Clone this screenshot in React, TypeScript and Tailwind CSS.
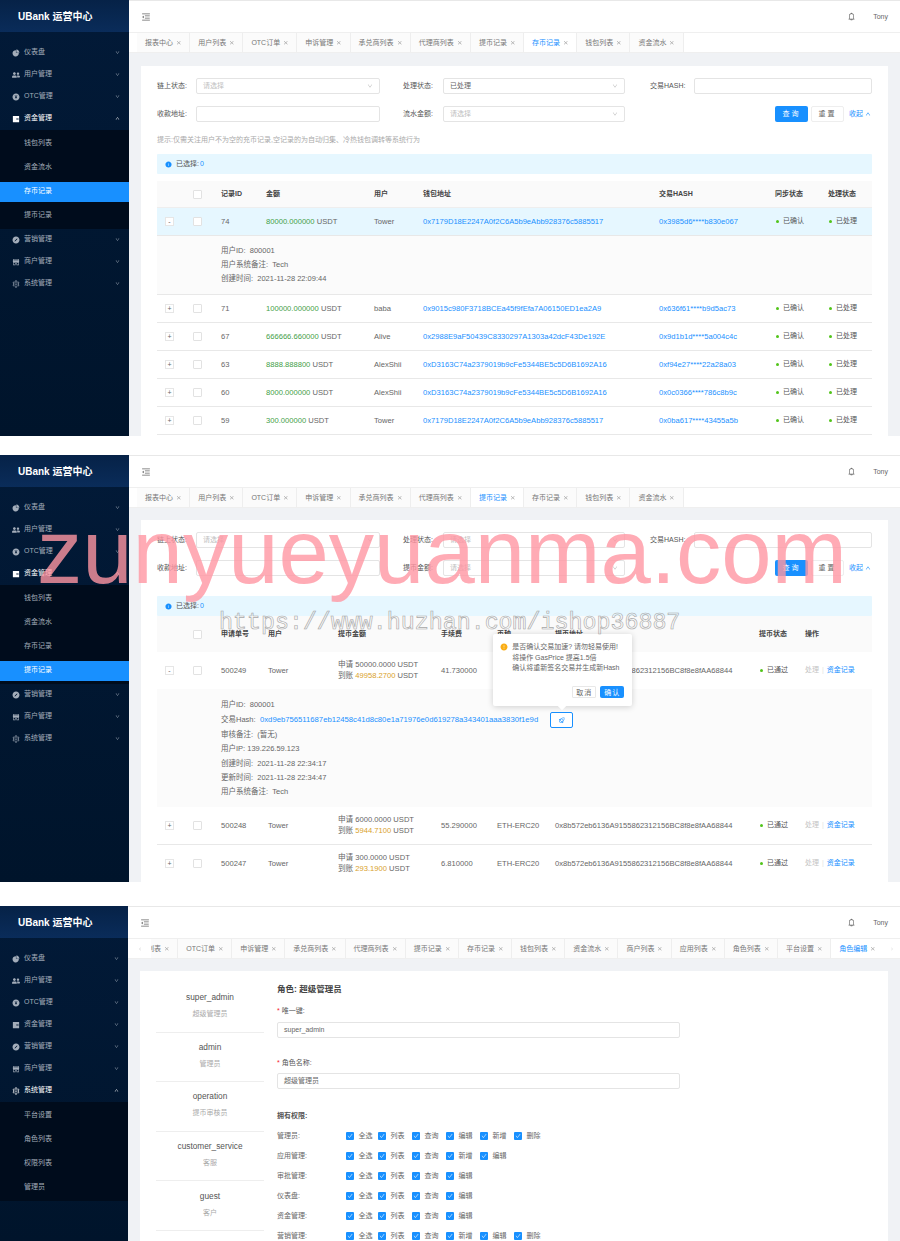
// @ts-nocheck
import React from "react";
import { AiFillPieChart, AiFillWallet, AiFillShop, AiFillPayCircle, AiFillCompass, AiOutlineSetting, AiOutlineDown, AiOutlineUp, AiOutlineClose, AiOutlineMenuFold, AiOutlineBell, AiOutlineRocket, AiFillExclamationCircle, AiFillInfoCircle, AiOutlineLeft, AiOutlineRight, AiOutlineCheck } from "react-icons/ai";
import { FaUserFriends } from "react-icons/fa";

const menus = [
  { name: "仪表盘", icon: AiFillPieChart },
  { name: "用户管理", icon: FaUserFriends },
  { name: "OTC管理", icon: AiFillPayCircle },
  { name: "资金管理", icon: AiFillWallet, subs: ["钱包列表", "资金流水", "存币记录", "提币记录"] },
  { name: "营销管理", icon: AiFillCompass },
  { name: "商户管理", icon: AiFillShop },
  { name: "系统管理", icon: AiOutlineSetting, subs: ["平台设置", "角色列表", "权限列表", "管理员"] },
];

const Sidebar = ({ open, active, w = "w-[129px]" }) => (
  <div className={`${w} shrink-0 h-full bg-gradient-to-b from-[#021a38] to-[#00142b] overflow-hidden`}>
    <div className="h-[32px] bg-gradient-to-b from-[#062247] to-[#0a2c5a] pl-[18px] flex items-center text-white text-[10px] font-semibold">UBank 运营中心</div>
    <div className="pt-[9.5px]">
      {menus.map(m => {
        const Icon = m.icon;
        const isOpen = open === m.name;
        return (
          <div key={m.name}>
            <div className={`h-[22px] pl-[12px] pr-[9px] flex items-center text-[7px] ${isOpen ? "text-white" : "text-[#a3adba]"}`}>
              <Icon className="w-[8px] h-[8px] mr-[4px] shrink-0" />
              <span>{m.name}</span>
              {isOpen ? <AiOutlineUp className="ml-auto w-[5px] h-[5px] text-white" /> : <AiOutlineDown className="ml-auto w-[5px] h-[5px]" />}
            </div>
            {isOpen && (
              <div className="bg-[#000c1c] pt-[2px] pb-[1px]">
                {m.subs.map(s => (
                  <div key={s} className="h-[24px] py-[2px]">
                    <div className={`h-[20px] pl-[24px] flex items-center text-[7px] ${s === active ? "bg-[#1890ff] text-white" : "text-[#a3adba]"}`}>{s}</div>
                  </div>
                ))}
              </div>
            )}
          </div>
        );
      })}
    </div>
  </div>
);

const Topbar = () => (
  <div className="h-[32px] bg-white border-t border-[#e8e8e8] flex items-center pl-[12px] pr-[12px] text-[#666]">
    <AiOutlineMenuFold className="w-[10px] h-[10px]" />
    <AiOutlineBell className="ml-auto w-[9px] h-[9px]" />
    <span className="ml-[17px] text-[7px] pt-[1px]">Tony</span>
  </div>
);

const Tab = ({ name, active }) => (
  <div className={`h-[20px] shrink-0 flex items-center pl-2 pr-[7.7px] gap-[3px] text-[7px] border-r border-[#eee] ${active ? "bg-white text-[#1890ff]" : "bg-[#fbfbfb] text-[#777]"}`}>
    <span>{name}</span>
    <AiOutlineClose className="w-[5.5px] h-[5.5px] text-[#888]" />
  </div>
);

const Tabs = ({ items, active }) => (
  <div className="h-[21px] bg-white border-t border-b border-[#efefef] pl-[8px] flex overflow-hidden">
    {items.map(t => <Tab key={t} name={t} active={t === active} />)}
  </div>
);

const Select = ({ w, value }) => (
  <div className={`${w} h-[16px] border border-[#e4e4e4] rounded-[2px] flex items-center justify-between pl-[6px] pr-[6px] text-[7px] ${value ? "text-[#666]" : "text-[#c0c0c0]"}`}>
    <span>{value || "请选择"}</span>
    <AiOutlineDown className="w-[6px] h-[6px] text-[#bbb]" />
  </div>
);

const Input = ({ w }) => <div className={`${w} h-[16px] border border-[#e4e4e4] rounded-[2px]`} />;

const Label = ({ w, text }) => <div className={`${w} text-[7px] text-[#555] shrink-0`}>{text}</div>;

const SearchForm = ({ status, amountLabel }) => (
  <div>
    <div className="flex items-center h-[16px]">
      <Label w="w-[39px]" text="链上状态:" />
      <Select w="w-[184px]" />
      <div className="w-[23px]" />
      <Label w="w-[40px]" text="处理状态:" />
      <Select w="w-[182px]" value={status} />
      <div className="w-[25px]" />
      <Label w="w-[44px]" text="交易HASH:" />
      <Input w="w-[178px]" />
    </div>
    <div className="flex items-center h-[16px] mt-[12px]">
      <Label w="w-[39px]" text="收款地址:" />
      <Input w="w-[184px]" />
      <div className="w-[23px]" />
      <Label w="w-[40px]" text={amountLabel} />
      <Select w="w-[182px]" />
      <button className="ml-[150px] w-[33px] h-[16px] bg-[#1890ff] text-white rounded-[2px] text-[7px] tracking-[2px]">查询</button>
      <button className="ml-[3px] w-[33px] h-[16px] border border-[#eee] text-[#666] rounded-[2px] text-[7px] tracking-[2px]">重置</button>
      <span className="ml-[5px] text-[7px] text-[#1890ff] flex items-center gap-[2px]">收起<AiOutlineUp className="w-[6px] h-[6px]" /></span>
    </div>
  </div>
);

const Alert = () => (
  <div className="h-[20px] bg-[#e6f7ff] flex items-center pl-[8px] text-[7px] text-[#555] rounded-[1px]">
    <AiFillInfoCircle className="w-[7px] h-[7px] text-[#1890ff] mr-[4px]" />
    已选择: <span className="text-[#1890ff] ml-[1px]">0</span>
  </div>
);

const Expand = ({ open }) => (
  <div className="ml-[8px] w-[9px] h-[9px] border border-[#e6e6e6] bg-white flex items-center justify-center text-[7px] leading-none text-[#666]">{open ? "-" : "+"}</div>
);

const Check = () => <div className="w-[9px] h-[9px] border border-[#e2e2e2] bg-white rounded-[1px]" />;

const Dot = ({ text }) => (
  <span className="flex items-center text-[7px] text-[#555]"><i className="w-[2.5px] h-[2.5px] rounded-full bg-[#52c41a] ml-[1px] mr-[4.5px]" />{text}</span>
);

const addr1 = "0x7179D18E2247A0f2C6A5b9eAbb928376c5885517";
const addr2 = "0xD3163C74a2379019b9cFe5344BE5c5D6B1692A16";
const depositRows = [
  ["71", "100000.000000", "baba", "0x9015c980F3718BCEa45f9fEfa7A06150ED1ea2A9", "0x636f61****b9d5ac73"],
  ["67", "666666.660000", "Alive", "0x2988E9aF50439C8330297A1303a42dcF43De192E", "0x9d1b1d****5a004c4c"],
  ["63", "8888.888800", "AlexShii", addr2, "0xf94e27****22a28a03"],
  ["60", "8000.000000", "AlexShii", addr2, "0x0c0366****786c8b9c"],
  ["59", "300.000000", "Tower", addr1, "0x0ba617****43455a5b"],
];

const depCols = "grid grid-cols-[36px_28px_45px_108px_49px_236px_116px_53px_44px] items-center";

const DepositRow = ({ r, open }) => (
  <div className={`${depCols} h-[28px] border-b border-[#e8e8e8] text-[7.6px] text-[#666] ${open ? "bg-[#e6f7ff]" : ""}`}>
    <Expand open={open} />
    <Check />
    <span>{r[0]}</span>
    <span><span className="text-[#43a047]">{r[1]}</span> USDT</span>
    <span>{r[2]}</span>
    <span className="text-[#1890ff]">{r[3]}</span>
    <span className="text-[#1890ff]">{r[4]}</span>
    <Dot text="已确认" />
    <Dot text="已处理" />
  </div>
);

const Deposit = () => (
  <div className="px-[16px] pt-[12px]">
    <SearchForm status="已处理" amountLabel="流水金额:" />
    <div className="h-[14px] mt-[11px] text-[7px] text-[#aaa] flex items-center">提示:仅需关注用户不为空的充币记录,空记录的为自动归集、冷热钱包调转等系统行为</div>
    <div className="mt-[7px]"><Alert /></div>
    <div className="mt-[7px]">
      <div className={`${depCols} h-[27px] bg-[#fafafa] border-b border-[#eee] text-[7px] font-bold text-[#444]`}>
        <span />
        <Check />
        <span>记录ID</span>
        <span>金额</span>
        <span>用户</span>
        <span>钱包地址</span>
        <span>交易HASH</span>
        <span>同步状态</span>
        <span>处理状态</span>
      </div>
      <DepositRow open r={["74", "80000.000000", "Tower", addr1, "0x3985d6****b830e067"]} />
      <div className="h-[59px] bg-[#fbfbfb] border-b border-[#e8e8e8] pl-[64px] pt-[8px] text-[7.5px] leading-[14px] text-[#666]">
        <div>用户ID:&nbsp; 800001</div>
        <div>用户系统备注:&nbsp; Tech</div>
        <div>创建时间:&nbsp; 2021-11-28 22:09:44</div>
      </div>
      {depositRows.map(r => <DepositRow key={r[0]} r={r} />)}
    </div>
  </div>
);

const wdCols = "grid grid-cols-[36px_28px_47px_70px_103px_56px_58px_204px_46px_67px] items-center";
const dest = "0x8b572eb6136A9155862312156BC8f8e8fAA68844";

const WdRow = ({ id, apply, got, fee, open, h = "h-[38px]", line = "border-b border-[#e8e8e8]" }) => (
  <div className={`${wdCols} ${h} ${line} text-[7.6px] text-[#666]`}>
    <Expand open={open} />
    <Check />
    <span>{id}</span>
    <span>Tower</span>
    <div className="leading-[10.5px]">
      <div>申请 {apply} USDT</div>
      <div>到账 <span className="text-[#d9a12b]">{got}</span> USDT</div>
    </div>
    <span>{fee}</span>
    <span>ETH-ERC20</span>
    <span>{dest}</span>
    <Dot text="已通过" />
    <span className="text-[7px]"><span className="text-[#c4c4c4]">处理</span><span className="text-[#e4e4e4] mx-[3px]">|</span><span className="text-[#1890ff]">资金记录</span></span>
  </div>
);

const Popover = () => (
  <div className="absolute left-[-58px] bottom-[calc(100%+7px)] w-[139px] h-[72px] bg-white rounded-[2px] shadow-[0_1px_6px_rgba(0,0,0,0.18)] text-[7px] text-[#666] leading-[10.5px] pl-[19px] pt-[8px] font-normal">
    <AiFillExclamationCircle className="absolute left-[7px] top-[9px] w-[8px] h-[8px] text-[#faad14]" />
    <div>是否确认交易加速? 请勿轻易使用!</div>
    <div>将操作 GasPrice 提高1.5倍</div>
    <div>确认将重新签名交易并生成新Hash</div>
    <div className="absolute right-[8px] bottom-[8px] flex gap-[4px]">
      <button className="w-[24px] h-[12px] border border-[#e8e8e8] rounded-[1px] text-[7px] leading-none tracking-[1px]">取消</button>
      <button className="w-[24px] h-[12px] bg-[#1890ff] text-white rounded-[2px] text-[7px] leading-none tracking-[1px]">确认</button>
    </div>
    <i className="absolute left-[66px] bottom-[-3px] w-[6px] h-[6px] bg-white rotate-45" />
  </div>
);

const Withdraw = () => (
  <div className="px-[16px] pt-[12px]">
    <SearchForm amountLabel="提币金额:" />
    <div className="mt-[20px]"><Alert /></div>
    <div className={`${wdCols} h-[36px] bg-[#fafafa] text-[7px] font-bold text-[#444]`}>
      <span />
      <Check />
      <span>申请单号</span>
      <span>用户</span>
      <span>提币金额</span>
      <span>手续费</span>
      <span>币种</span>
      <span>提币地址</span>
      <span>提币状态</span>
      <span>操作</span>
    </div>
    <WdRow open id="500249" apply="50000.0000" got="49958.2700" fee="41.730000" h="h-[37px]" line="" />
    <div className="h-[118px] bg-[#fbfbfb] pl-[64px] pt-[9px] text-[7.5px] leading-[14.2px] text-[#666]">
      <div>用户ID:&nbsp; 800001</div>
      <div className="flex items-center h-[16px]">
        <span className="w-[39px]">交易Hash:</span>
        <span className="text-[#1890ff] text-[7.7px]">0xd9eb756511687eb12458c41d8c80e1a71976e0d619278a343401aaa3830f1e9d</span>
        <div className="relative ml-[12px] w-[23px] h-[16px] border border-[#1890ff] rounded-[2px] bg-white flex items-center justify-center">
          <AiOutlineRocket className="w-[8px] h-[8px] text-[#1890ff] rotate-45" />
          <Popover />
        </div>
      </div>
      <div>审核备注:&nbsp; (暂无)</div>
      <div>用户IP: 139.226.59.123</div>
      <div>创建时间:&nbsp; 2021-11-28 22:34:17</div>
      <div>更新时间:&nbsp; 2021-11-28 22:34:47</div>
      <div>用户系统备注:&nbsp; Tech</div>
    </div>
    <WdRow id="500248" apply="6000.0000" got="5944.7100" fee="55.290000" />
    <WdRow id="500247" apply="300.0000" got="293.1900" fee="6.810000" />
  </div>
);

const roles = [
  ["super_admin", "超级管理员"],
  ["admin", "管理员"],
  ["operation", "提币审核员"],
  ["customer_service", "客服"],
  ["guest", "客户"],
];

const perms = [
  ["管理员:", ["全选", "列表", "查询", "编辑", "新增", "删除"]],
  ["应用管理:", ["全选", "列表", "查询", "新增", "编辑"]],
  ["审批管理:", ["全选", "列表", "查询", "编辑"]],
  ["仪表盘:", ["全选", "列表", "查询", "编辑"]],
  ["资金管理:", ["全选", "列表", "查询", "编辑"]],
  ["营销管理:", ["全选", "列表", "查询", "新增", "编辑", "删除"]],
];

const Checked = ({ text, first }) => (
  <div className={`${first ? "w-[32px]" : "w-[34px]"} flex items-center gap-[4.5px] text-[7px] text-[#666]`}>
    <span className="w-[8px] h-[8px] bg-[#1890ff] rounded-[1px] flex items-center justify-center text-white shrink-0">
      <AiOutlineCheck className="w-[6px] h-[6px]" />
    </span>
    <span>{text}</span>
  </div>
);

const Role = () => (
  <div className="flex h-full pl-[16px]">
    <div className="w-[108px] shrink-0 pt-[12px]">
      {roles.map(r => (
        <div key={r[0]} className="h-[49.6px] pb-[4px] border-b border-[#eee] flex flex-col items-center justify-center gap-[7px]">
          <div className="text-[8.3px] leading-[10px] text-[#555]">{r[0]}</div>
          <div className="text-[7px] leading-[9px] text-[#aaa]">{r[1]}</div>
        </div>
      ))}
    </div>
    <div className="ml-[13px] w-[403px] pt-[12px]">
      <div className="text-[8.5px] leading-[12px] font-bold text-[#444]">角色: 超级管理员</div>
      <div className="mt-[11px] text-[7px] leading-[10px] text-[#555]"><span className="text-[#f5222d]">* </span>唯一键:</div>
      <div className="mt-[6px] h-[16px] border border-[#e4e4e4] rounded-[2px] pl-[6px] flex items-center text-[7px] text-[#666]">super_admin</div>
      <div className="mt-[20px] text-[7px] leading-[10px] text-[#555]"><span className="text-[#f5222d]">* </span>角色名称:</div>
      <div className="mt-[5px] h-[16px] border border-[#e4e4e4] rounded-[2px] pl-[6px] flex items-center text-[7px] text-[#666]">超级管理员</div>
      <div className="mt-[22px] text-[7px] leading-[10px] font-bold text-[#555]">拥有权限:</div>
      <div className="mt-[5px]">
        {perms.map(p => (
          <div key={p[0]} className="h-[20px] flex items-center">
            <div className="w-[69px] text-[7px] text-[#666]">{p[0]}</div>
            {p[1].map((c, i) => <Checked key={c} text={c} first={i === 0} />)}
          </div>
        ))}
      </div>
    </div>
  </div>
);

const Panel = ({ h, open, active, tabs, w, top = "pt-[12px]", children }) => (
  <div className={`${h} flex overflow-hidden`}>
    <Sidebar open={open} active={active} w={w} />
    <div className="flex-1 min-w-0 flex flex-col bg-[#f0f2f5]">
      <Topbar />
      {tabs}
      <div className={`flex-1 min-h-0 ${top} pl-[12px] pr-[12px]`}>
        <div className="bg-white h-full overflow-hidden">{children}</div>
      </div>
    </div>
  </div>
);

const tabs1 = ["报表中心", "用户列表", "OTC订单", "申诉管理", "承兑商列表", "代理商列表", "提币记录", "存币记录", "钱包列表", "资金流水"];
const tabs3 = ["用户列表", "OTC订单", "申诉管理", "承兑商列表", "代理商列表", "提币记录", "存币记录", "钱包列表", "资金流水", "商户列表", "应用列表", "角色列表", "平台设置", "角色编辑"];

export default function App() {
  return (
    <div className="relative w-[900px] h-[1241px] overflow-hidden bg-white font-['Liberation_Sans','Noto_Sans_CJK_SC',sans-serif]">
      <Panel h="h-[436px]" top="pt-[13px]" open="资金管理" active="存币记录" tabs={<Tabs items={tabs1} active="存币记录" />}>
        <Deposit />
      </Panel>
      <div className="mt-[19px]">
        <Panel h="h-[427px]" open="资金管理" active="提币记录" tabs={<Tabs items={tabs1} active="提币记录" />}>
          <Withdraw />
        </Panel>
      </div>
      <div className="mt-[24px]">
        <Panel h="h-[335px]" w="w-[128px]" open="系统管理" active="" tabs={
          <div className="h-[21px] bg-white border-t border-b border-[#efefef] flex">
            <div className="w-[23px] shrink-0 flex items-center justify-center text-[#bbb]"><AiOutlineLeft className="w-[4px] h-[4px]" /></div>
            <div className="flex-1 min-w-0 overflow-hidden">
              <div className="flex ml-[-26px]">
                {tabs3.map(t => <Tab key={t} name={t} active={t === "角色编辑"} />)}
              </div>
            </div>
            <div className="w-[17px] shrink-0 flex items-center justify-center text-[#ccc]"><AiOutlineRight className="w-[4px] h-[4px]" /></div>
          </div>
        }>
          <Role />
        </Panel>
      </div>
      <div className="absolute left-[37px] top-[502px] text-[90.5px] leading-[100px] whitespace-nowrap text-[rgba(255,150,163,0.8)]">zunyueyuanma.com</div>
      <div className="absolute left-[219px] top-[608px] text-[23.3px] leading-[30px] whitespace-nowrap font-['Liberation_Mono',monospace] text-transparent [-webkit-text-stroke:0.6px_#a6a6a6]">https://www.huzhan.com/ishop36887</div>
    </div>
  );
}
